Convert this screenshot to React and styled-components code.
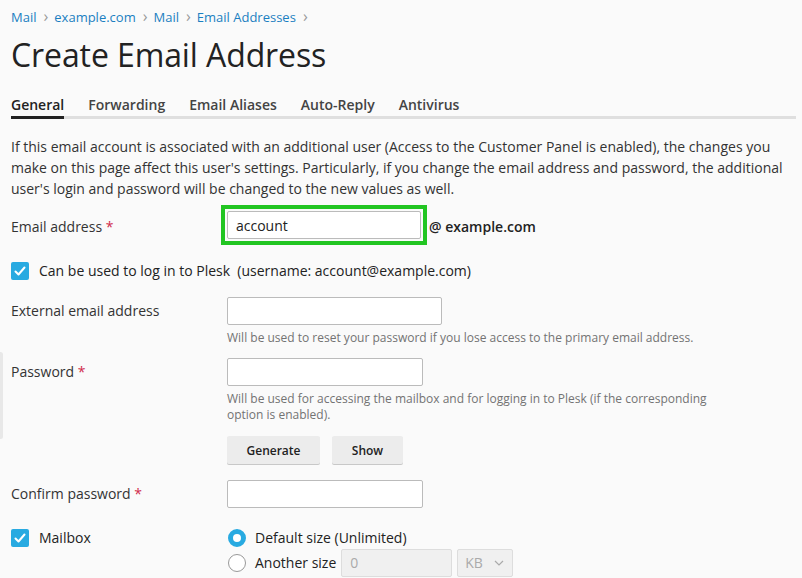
import styled, { createGlobalStyle } from "styled-components";

const GlobalStyle = createGlobalStyle`
	html, body {
		margin: 0;
		padding: 0;
		background: #fafafa;
	}
	body {
		font-family: "Open Sans", "Liberation Sans", sans-serif;
		color: #333;
		font-size: 14px;
	}
	* {
		box-sizing: border-box;
	}
`;

const tabs = ["General", "Forwarding", "Email Aliases", "Auto-Reply", "Antivirus"];
const crumbs = ["Mail", "example.com", "Mail", "Email Addresses"];

function Check() {
	return (
		<CheckBox>
			<svg width="14" height="14" viewBox="0 0 14 14">
				<path d="M2.5 7.5 L5.5 10.5 L11.5 3.5" fill="none" stroke="#fff" strokeWidth="2" strokeLinecap="round" strokeLinejoin="round" />
			</svg>
		</CheckBox>
	);
}

export default function App() {
	return (
		<Page>
			<GlobalStyle />
			<SideHandle />
			<Breadcrumbs>
				{crumbs.map((c, i) => (
					<Crumb key={i}>
						<CrumbLink>{c}</CrumbLink>
						<Chevron>›</Chevron>
					</Crumb>
				))}
			</Breadcrumbs>
			<Title>Create Email Address</Title>
			<Tabs>
				{tabs.map((t, i) => (
					<Tab key={t} $active={i === 0}>{t}</Tab>
				))}
			</Tabs>
			<Intro>
				If this email account is associated with an additional user (Access to the Customer Panel is enabled), the changes you
				make on this page affect this user's settings. Particularly, if you change the email address and password, the additional
				user's login and password will be changed to the new values as well.
			</Intro>

			<Form>
				<EmailRow>
					<Label>Email address <Req>*</Req></Label>
					<Field $inline>
						<Highlight>
							<Input $w={194} defaultValue="account" />
						</Highlight>
						<Domain>@ example.com</Domain>
					</Field>
				</EmailRow>

				<CheckRow $top={16}>
					<Check />
					<CheckLabel>Can be used to log in to Plesk&nbsp; (username: account@example.com)</CheckLabel>
				</CheckRow>

				<Row $top={16}>
					<Label>External email address</Label>
					<Field>
						<Input $w={215} />
						<Hint>Will be used to reset your password if you lose access to the primary email address.</Hint>
					</Field>
				</Row>

				<Row $top={12}>
					<Label>Password <Req>*</Req></Label>
					<Field>
						<Input $w={196} />
						<Hint>
							Will be used for accessing the mailbox and for logging in to Plesk (if the corresponding option is enabled).
						</Hint>
						<Buttons>
							<Button>Generate</Button>
							<Button $w={71}>Show</Button>
						</Buttons>
					</Field>
				</Row>

				<Row $top={16}>
					<Label>Confirm password <Req>*</Req></Label>
					<Field>
						<Input $w={196} />
					</Field>
				</Row>

				<Row $top={17}>
					<MailboxLabel>
						<Check />
						<CheckLabel>Mailbox</CheckLabel>
					</MailboxLabel>
					<Field>
						<RadioLine>
							<Radio $checked />
							<span>Default size (Unlimited)</span>
						</RadioLine>
						<RadioLine>
							<Radio />
							<span>Another size</span>
							<SizeInput disabled defaultValue="0" />
							<Select>
								<span>KB</span>
								<svg width="10" height="6" viewBox="0 0 10 6">
									<path d="M1 1 L5 5 L9 1" fill="none" stroke="#aaa" strokeWidth="1.2" />
								</svg>
							</Select>
						</RadioLine>
					</Field>
				</Row>
			</Form>
		</Page>
	);
}

const Page = styled.div`
	min-height: 578px;
	padding: 7px 11px 0 11px;
	position: relative;
	overflow: hidden;
`;

const SideHandle = styled.div`
	position: absolute;
	left: -2px;
	top: 352px;
	width: 5px;
	height: 87px;
	background: #e8e8e8;
	border-radius: 3px;
`;

const Breadcrumbs = styled.nav`
	display: flex;
	align-items: center;
	font-size: 13px;
	line-height: 20px;
`;

const Crumb = styled.span`
	display: flex;
	align-items: center;
`;

const CrumbLink = styled.a`
	color: #1a7fc1;
	text-decoration: none;
`;

const Chevron = styled.span`
	color: #999;
	font-size: 16px;
	margin: 0 6px 0 7px;
	position: relative;
	top: -1px;
`;

const Title = styled.h1`
	margin: 6px 0 0 0;
	font-size: 32px;
	line-height: 44px;
	font-weight: 400;
	color: #222;
	letter-spacing: -0.1px;
`;

const Tabs = styled.div`
	display: flex;
	gap: 24px;
	margin-top: 18px;
	border-bottom: 3px solid #dfdfdf;
	margin-right: -5px;
`;

const Tab = styled.div`
	font-size: 14px;
	font-weight: 600;
	line-height: 20px;
	padding-bottom: 1px;
	color: ${(p) => (p.$active ? "#222" : "#444")};
	margin-bottom: -3px;
	border-bottom: 3px solid ${(p) => (p.$active ? "#222" : "transparent")};
`;

const Intro = styled.p`
	margin: 17px 0 0 0;
	font-size: 14px;
	line-height: 21px;
	color: #333;
`;

const Form = styled.div`
	display: flex;
	flex-direction: column;
`;

const Row = styled.div`
	display: grid;
	grid-template-columns: 216px 1fr;
	align-items: start;
	margin-top: ${(p) => p.$top || 0}px;
`;

const EmailRow = styled.div`
	display: grid;
	grid-template-columns: 210px 1fr;
	align-items: center;
	margin-top: 6px;
`;

const Label = styled.div`
	font-size: 14px;
	line-height: 20px;
	padding-top: 4px;
	color: #333;

	${EmailRow} & {
		padding-top: 3px;
	}
`;

const Req = styled.span`
	color: #d02a4b;
`;

const Field = styled.div`
	display: flex;
	flex-direction: ${(p) => (p.$inline ? "row" : "column")};
	align-items: ${(p) => (p.$inline ? "center" : "flex-start")};
`;

const Highlight = styled.div`
	border: 4px solid #22c522;
	padding: 2px;
	display: flex;
`;

const Input = styled.input`
	width: ${(p) => p.$w || 196}px;
	height: 28px;
	border: 1px solid #bbb;
	border-radius: 2px;
	background: #fff;
	padding: 0 8px;
	font-family: "Open Sans", "Liberation Sans", sans-serif;
	font-size: 14px;
	color: #222;
	outline: none;
`;

const Domain = styled.span`
	font-weight: 600;
	font-size: 14px;
	color: #222;
	margin-left: 2px;
	padding-top: 3px;
`;

const CheckRow = styled.label`
	display: flex;
	align-items: center;
	gap: 10px;
	margin-top: ${(p) => p.$top || 0}px;
`;

const MailboxLabel = styled.div`
	display: flex;
	align-items: center;
	gap: 10px;
	padding-top: 3px;
`;

const CheckBox = styled.span`
	width: 18px;
	height: 18px;
	border-radius: 2px;
	background: #28aae1;
	display: flex;
	align-items: center;
	justify-content: center;
	flex-shrink: 0;
`;

const CheckLabel = styled.span`
	font-size: 14px;
	line-height: 20px;
	color: #222;
`;

const Hint = styled.div`
	font-size: 12px;
	line-height: 16px;
	color: #737373;
	margin-top: 5px;
	max-width: 490px;
`;

const Buttons = styled.div`
	display: flex;
	gap: 12px;
	margin-top: 13px;
`;

const Button = styled.button`
	width: ${(p) => p.$w || 93}px;
	height: 28px;
	border: none;
	border-radius: 2px;
	background: #ececec;
	box-shadow: 0 1px 0 #c8c8c8;
	font-family: "Open Sans", "Liberation Sans", sans-serif;
	font-size: 12px;
	font-weight: 600;
	color: #222;
	padding: 0;
`;

const RadioLine = styled.div`
	display: flex;
	align-items: center;
	gap: 9px;
	font-size: 14px;
	color: #222;
	height: 25px;
	margin-left: 1px;
`;

const Radio = styled.span`
	width: 18px;
	height: 18px;
	border-radius: 50%;
	background: #fff;
	border: ${(p) => (p.$checked ? "5px solid #28aae1" : "1px solid #999")};
	flex-shrink: 0;
`;

const SizeInput = styled.input`
	width: 111px;
	height: 28px;
	border: 1px solid #ddd;
	border-radius: 2px;
	background: #f0f0f0;
	padding: 0 8px;
	margin-left: -4px;
	font-family: "Open Sans", "Liberation Sans", sans-serif;
	font-size: 14px;
	color: #aaa;
`;

const Select = styled.div`
	width: 56px;
	height: 28px;
	border: 1px solid #ddd;
	border-radius: 2px;
	background: #f0f0f0;
	display: flex;
	align-items: center;
	justify-content: space-between;
	padding: 0 8px 0 7px;
	margin-left: -4px;
	color: #aaa;
	font-size: 14px;
`;
